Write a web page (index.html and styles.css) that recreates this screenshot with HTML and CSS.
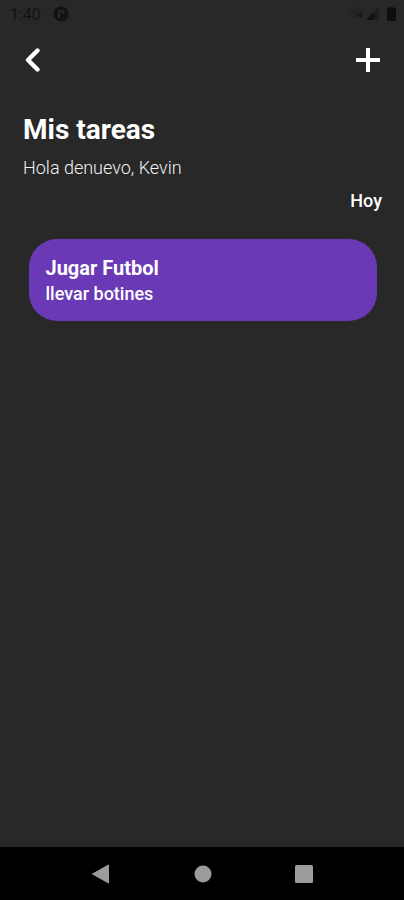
FILE: index.html
```
<!DOCTYPE html>
<html lang="es">
<head>
<meta charset="utf-8">
<title>Mis tareas</title>
<link rel="stylesheet" href="styles.css">
</head>
<body>
<div class="screen">
  <div class="status">
    <span class="time">1:40</span>
    <svg class="app-icon" width="16" height="16" viewBox="0 0 16 16"><circle cx="8" cy="8" r="7.6" fill="#131313"/><path d="M6 12V5.200H9.200Q11 5.500 10.500 8" fill="none" stroke="#292929" stroke-width="2"/></svg>
    <svg class="signals" width="50" height="16" viewBox="0 0 50 16"><path d="M0 3.5Q8 -1 16 3.5L8 13Z" fill="#232323"/><path d="M9 9L14 7v6Z" fill="#161616"/><path d="M18 14L31 1v13Z" fill="#1d1d1d"/><path d="M18 14l8-8v8Z" fill="#121212"/><path d="M39 2.500h2.500V1h4v1.500H48V15h-9Z" fill="#0d0d0d"/></svg>
  </div>
  <header class="toolbar">
    <svg width="16" height="26" viewBox="0 0 16 26"><path d="M13.500 3.500L4 13l9.500 9.500" fill="none" stroke="#fff" stroke-width="4.300" stroke-linecap="round" stroke-linejoin="round"/></svg>
    <svg width="24" height="24" viewBox="0 0 24 24"><path d="M12 0v24M0 12h24" stroke="#fff" stroke-width="4"/></svg>
  </header>
  <main class="content">
    <h1 class="title">Mis tareas</h1>
    <p class="greeting">Hola denuevo, Kevin</p>
    <h2 class="day">Hoy</h2>
    <article class="task">
      <h3 class="task-name">Jugar Futbol</h3>
      <p class="task-note">llevar botines</p>
    </article>
  </main>
  <nav class="navbar">
    <svg width="20" height="20" viewBox="0 0 20 20"><path d="M1.500 10L17.500 1v18Z" fill="#9c9c9c" stroke="#9c9c9c" stroke-linejoin="round"/></svg>
    <svg width="20" height="20" viewBox="0 0 20 20"><circle cx="10" cy="10" r="8.500" fill="#9c9c9c"/></svg>
    <svg width="20" height="20" viewBox="0 0 20 20"><rect x="1" y="1" width="18" height="18" rx="1.500" fill="#9c9c9c"/></svg>
  </nav>
</div>
</body>
</html>
```
FILE: styles.css
```
* { box-sizing: border-box; }
body { margin: 0; background: #282828; font-family: Roboto, sans-serif; color: #fff; }
h1, h2, h3, p { margin: 0; }
svg { display: block; }
.screen { height: 900px; display: flex; flex-direction: column; overflow: hidden; }
.status { height: 28px; padding: 0 6px 0 10px; display: flex; align-items: center; }
.time { font-size: 16px; color: #131313; width: 43px; }
.signals { margin-left: auto; }
.toolbar { height: 63px; padding: 0 24px; display: flex; align-items: center; justify-content: space-between; }
.content { flex: 1; padding: 22px 22px 0 23px; display: flex; flex-direction: column; }
.title { font-size: 28px; line-height: 34px; font-weight: 700; }
.greeting { margin-top: 10px; font-size: 18px; line-height: 22px; font-weight: 300; color: #f2f2f2; }
.day { margin-top: 10px; font-size: 18px; line-height: 24px; font-weight: 500; align-self: flex-end; }
.task { margin: 26px 5.5px 0 5.5px; height: 82px; border-radius: 28px; background: #6a39b5; padding: 16px 17px 0; }
.task-name { font-size: 20px; line-height: 26px; font-weight: 700; }
.task-note { margin-top: 1px; font-size: 18px; line-height: 24px; font-weight: 500; }
.navbar { height: 53px; background: #000; display: flex; align-items: center; gap: 81.5px; padding-left: 91px; }
```
